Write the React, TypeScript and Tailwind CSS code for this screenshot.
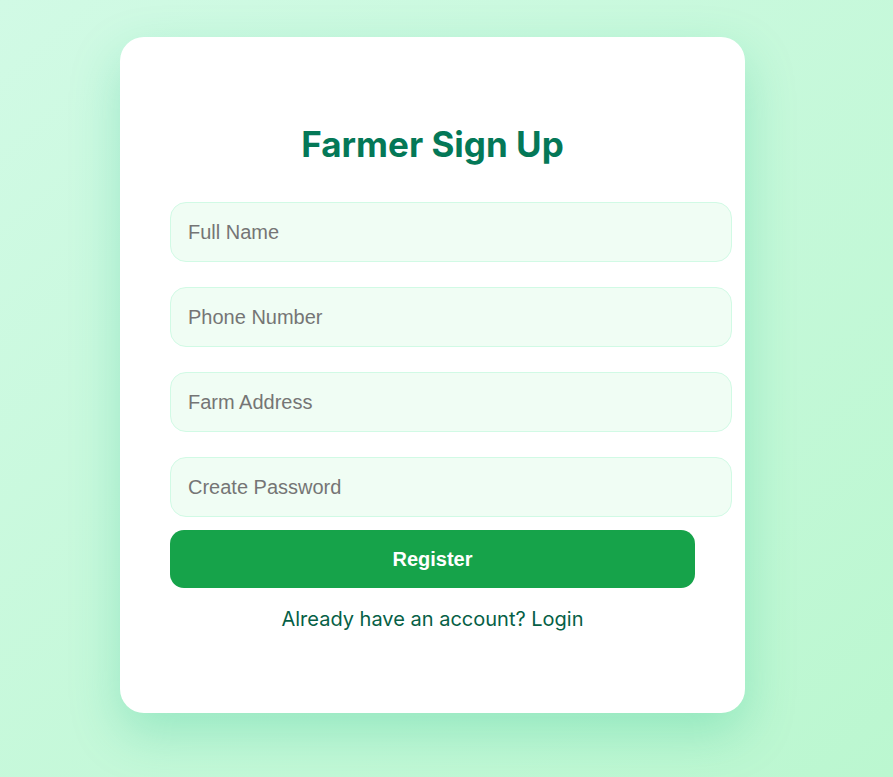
import React from "react";

const fields = [
  { label: "Full Name", type: "text", gap: "mb-[25px]" },
  { label: "Phone Number", type: "text", gap: "mb-[25px]" },
  { label: "Farm Address", type: "text", gap: "mb-[25px]" },
  { label: "Create Password", type: "password", gap: "mb-[13px]" },
];

export default function App() {
  return (
    <div className="min-h-screen w-full bg-gradient-to-br from-[#d1fae5] to-[#bbf7d0] pt-[37px] pb-[64px]">
      <div className="ml-[120px] flex h-[676px] w-[625px] flex-col rounded-[24px] bg-white px-[50px] pt-[87px] shadow-[0_20px_50px_rgba(16,185,129,0.25)]">
        <h2 className="mb-[38px] text-center font-['Inter',sans-serif] text-[35px] leading-[40px] font-bold text-[#047857]">
          Farmer Sign Up
        </h2>
        <form className="flex flex-col" onSubmit={(e) => e.preventDefault()}>
          {fields.map((f) => (
            <input
              key={f.label}
              type={f.type}
              placeholder={f.label}
              className={`box-content h-[58px] w-[525px] rounded-[16px] border border-[#d1fae5] bg-[#f0fdf4] pr-[18px] pl-[17px] font-['Liberation_Sans',Arial,sans-serif] text-[20px] outline-none placeholder:text-[#757575] ${f.gap}`}
            />
          ))}
          <button
            type="submit"
            className="h-[58px] w-[525px] rounded-[14px] bg-[#16a34a] font-['Liberation_Sans',Arial,sans-serif] text-[20px] font-bold text-white"
          >
            Register
          </button>
        </form>
        <p className="mt-[17px] text-center font-['Inter',sans-serif] text-[20px] leading-[28px] text-[#065f46]">
          Already have an account? Login
        </p>
      </div>
    </div>
  );
}
